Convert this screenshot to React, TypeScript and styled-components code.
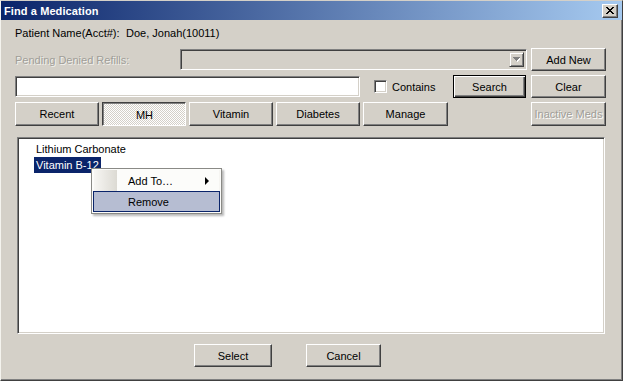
import React from 'react';
import styled, { createGlobalStyle, css } from 'styled-components';

const GlobalStyle = createGlobalStyle`
  html, body { margin: 0; padding: 0; background: #D4D0C8; }
  body { font-family: "Liberation Sans", Arial, sans-serif; font-size: 11px; color: #000; }
  * { box-sizing: border-box; }
`;

const sunken = css`
  border: 1px solid;
  border-color: #808080 #ffffff #ffffff #808080;
  box-shadow: inset 1px 1px #404040, inset -1px -1px #D4D0C8;
`;

const Window = styled.div`
  width: 623px;
  height: 381px;
  background: #D4D0C8;
  border-top: 1px solid #D4D0C8;
  border-left: 1px solid #f4f3ee;
  border-right: 1px solid #404040;
  border-bottom: 1px solid #404040;
  box-shadow: inset -1px -1px #808080;
  display: flex;
  flex-direction: column;
  overflow: hidden;
`;

const TitleBar = styled.div`
  height: 19px;
  flex: none;
  background: linear-gradient(to right, #0A246A 0%, #A6CAF0 100%);
  display: flex;
  align-items: center;
  justify-content: space-between;
  padding: 0 4px 0 3px;
`;

const Title = styled.span`
  color: #fff;
  font-weight: bold;
  font-size: 11px;
  letter-spacing: 0.1px;
`;

const CloseBox = styled.div`
  width: 16px;
  height: 14px;
  background: #D4D0C8;
  border: 1px solid;
  border-color: #fff #404040 #404040 #fff;
  box-shadow: inset -1px -1px #808080;
  display: flex;
  align-items: center;
  justify-content: center;
`;

const Content = styled.div`
  flex: 1;
  display: flex;
  flex-direction: column;
  padding: 0 16px 0 14px;
`;

const Row = styled.div<{ $mt: number; $h: number }>`
  display: flex;
  align-items: center;
  margin-top: ${(p) => p.$mt}px;
  height: ${(p) => p.$h}px;
  flex: none;
`;

const Label = styled.span<{ $w?: number; $disabled?: boolean }>`
  width: ${(p) => (p.$w ? `${p.$w}px` : 'auto')};
  flex: none;
  white-space: nowrap;
  color: ${(p) => (p.$disabled ? '#a09e98' : '#000')};
  text-shadow: ${(p) => (p.$disabled ? '1px 1px #f2f1ec' : 'none')};
`;

const Combo = styled.div`
  ${sunken};
  flex: 1;
  height: 21px;
  background: #D4D0C8;
  display: flex;
  justify-content: flex-end;
  align-items: center;
  padding: 2px;
`;

const ComboButton = styled.div`
  width: 15px;
  height: 15px;
  background: #D4D0C8;
  border: 1px solid;
  border-color: #D4D0C8 #404040 #404040 #D4D0C8;
  box-shadow: inset 1px 1px #fff, inset -1px -1px #808080;
  display: flex;
  align-items: center;
  justify-content: center;
`;

const Button = styled.div<{ $w: number; $h?: number; $ml?: number; $default?: boolean; $pressed?: boolean; $disabled?: boolean }>`
  width: ${(p) => p.$w}px;
  height: ${(p) => p.$h ?? 23}px;
  margin-left: ${(p) => (p.$ml === undefined ? 0 : p.$ml)}px;
  flex: none;
  display: flex;
  align-items: center;
  justify-content: center;
  white-space: nowrap;
  background: #D4D0C8;
  color: ${(p) => (p.$disabled ? '#a09e98' : '#000')};
  text-shadow: ${(p) => (p.$disabled ? '1px 1px #fff' : 'none')};
  border: 1px solid;
  border-color: #fff #404040 #404040 #fff;
  box-shadow: inset -1px -1px #808080;
  ${(p) =>
    p.$default &&
    css`
      border-color: #000;
      box-shadow: inset 1px 1px #fff, inset -1px -1px #404040, inset -2px -2px #808080;
    `}
  ${(p) =>
    p.$pressed &&
    css`
      border-color: #404040 #fff #fff #404040;
      box-shadow: inset 1px 1px #808080;
      background-color: #D4D0C8;
      background-image: conic-gradient(#ffffff 25%, #D4D0C8 0 50%, #ffffff 0 75%, #D4D0C8 0);
      background-size: 2px 2px;
      padding: 1px 0 0 1px;
    `}
`;

const AutoSpacer = styled.div`
  flex: 1;
`;

const TextInput = styled.div`
  ${sunken};
  width: 345px;
  height: 21px;
  background: #fff;
  flex: none;
`;

const CheckLabel = styled.div`
  display: flex;
  align-items: center;
  gap: 5px;
  margin-left: 14px;
`;

const CheckBox = styled.div`
  ${sunken};
  width: 13px;
  height: 13px;
  background: #fff;
`;

const Tabs = styled.div`
  display: flex;
  gap: 3px;
`;

const ListBox = styled.div`
  ${sunken};
  position: relative;
  margin: 11px 1px 0 2px;
  height: 197px;
  background: #fff;
  padding: 3px 0 0 16px;
  flex: none;
`;

const ListItem = styled.div<{ $selected?: boolean }>`
  height: 16px;
  line-height: 16px;
  display: flex;
`;

const ItemText = styled.span<{ $selected?: boolean }>`
  padding: 0 2px;
  background: ${(p) => (p.$selected ? '#0A246A' : 'transparent')};
  color: ${(p) => (p.$selected ? '#fff' : '#000')};
`;

const Menu = styled.div`
  position: absolute;
  left: 73px;
  top: 30px;
  width: 131px;
  background: #FCFCFA;
  border: 1px solid #8a8a86;
  padding: 1px;
  box-shadow: 2px 2px 2px rgba(0, 0, 0, 0.28);
`;

const MenuItem = styled.div<{ $active?: boolean }>`
  position: relative;
  height: 21px;
  display: flex;
  align-items: center;
  padding-left: 34px;
  border: 1px solid ${(p) => (p.$active ? '#0A246A' : 'transparent')};
  background: ${(p) =>
    p.$active ? '#B6BDD2' : 'linear-gradient(to right, #F7F6F3 0px, #DCDAD3 23px, transparent 23px)'};
`;

const SubArrow = styled.div`
  position: absolute;
  right: 10px;
  top: 6px;
  width: 0;
  height: 0;
  border-top: 4px solid transparent;
  border-bottom: 4px solid transparent;
  border-left: 4px solid #000;
`;

const BottomRow = styled.div`
  display: flex;
  align-items: center;
  margin-top: 10px;
  padding-left: 179px;
  gap: 34px;
`;

export default function App() {
  return (
    <>
      <GlobalStyle />
      <Window>
        <TitleBar>
          <Title>Find a Medication</Title>
          <CloseBox>
            <svg width="8" height="7" viewBox="0 0 8 7" shapeRendering="crispEdges">
              <path
                d="M0 0h2v1H0zM6 0h2v1H6zM1 1h2v1H1zM5 1h2v1H5zM2 2h4v1H2zM3 3h2v1H3zM2 4h4v1H2zM1 5h2v1H1zM5 5h2v1H5zM0 6h2v1H0zM6 6h2v1H6z"
                fill="#000"
              />
            </svg>
          </CloseBox>
        </TitleBar>
        <Content>
          <Row $mt={4} $h={18}>
            <Label $w={111}>Patient Name(Acct#):</Label>
            <Label>Doe, Jonah(10011)</Label>
          </Row>
          <Row $mt={6} $h={23}>
            <Label $w={165} $disabled>
              Pending Denied Refills:
            </Label>
            <Combo>
              <ComboButton>
                <svg width="7" height="5" viewBox="0 0 7 5" shapeRendering="crispEdges">
                  <path d="M1 1h7v1H1zM2 2h5v1H2zM3 3h3v1H3zM4 4h1v1H4z" fill="#fff" />
                  <path d="M0 0h7v1H0zM1 1h5v1H1zM2 2h3v1H2zM3 3h1v1H3z" fill="#808080" />
                </svg>
              </ComboButton>
            </Combo>
            <Button $w={75} $ml={4}>
              Add New
            </Button>
          </Row>
          <Row $mt={4} $h={23}>
            <TextInput />
            <CheckLabel>
              <CheckBox />
              <Label>Contains</Label>
            </CheckLabel>
            <AutoSpacer />
            <Button $w={73} $default>
              Search
            </Button>
            <Button $w={75} $ml={5}>
              Clear
            </Button>
          </Row>
          <Row $mt={4} $h={24}>
            <Tabs>
              <Button $w={84} $h={24}>Recent</Button>
              <Button $w={84} $h={24} $pressed>MH</Button>
              <Button $w={84} $h={24}>Vitamin</Button>
              <Button $w={84} $h={24}>Diabetes</Button>
              <Button $w={85} $h={24}>Manage</Button>
            </Tabs>
            <AutoSpacer />
            <Button $w={75} $h={24} $disabled>
              Inactive Meds
            </Button>
          </Row>
          <ListBox>
            <ListItem>
              <ItemText>Lithium Carbonate</ItemText>
            </ListItem>
            <ListItem>
              <ItemText $selected>Vitamin B-12</ItemText>
            </ListItem>
            <Menu>
              <MenuItem>
                Add To…
                <SubArrow />
              </MenuItem>
              <MenuItem $active>Remove</MenuItem>
            </Menu>
          </ListBox>
          <BottomRow>
            <Button $w={78}>Select</Button>
            <Button $w={75}>Cancel</Button>
          </BottomRow>
        </Content>
      </Window>
    </>
  );
}
